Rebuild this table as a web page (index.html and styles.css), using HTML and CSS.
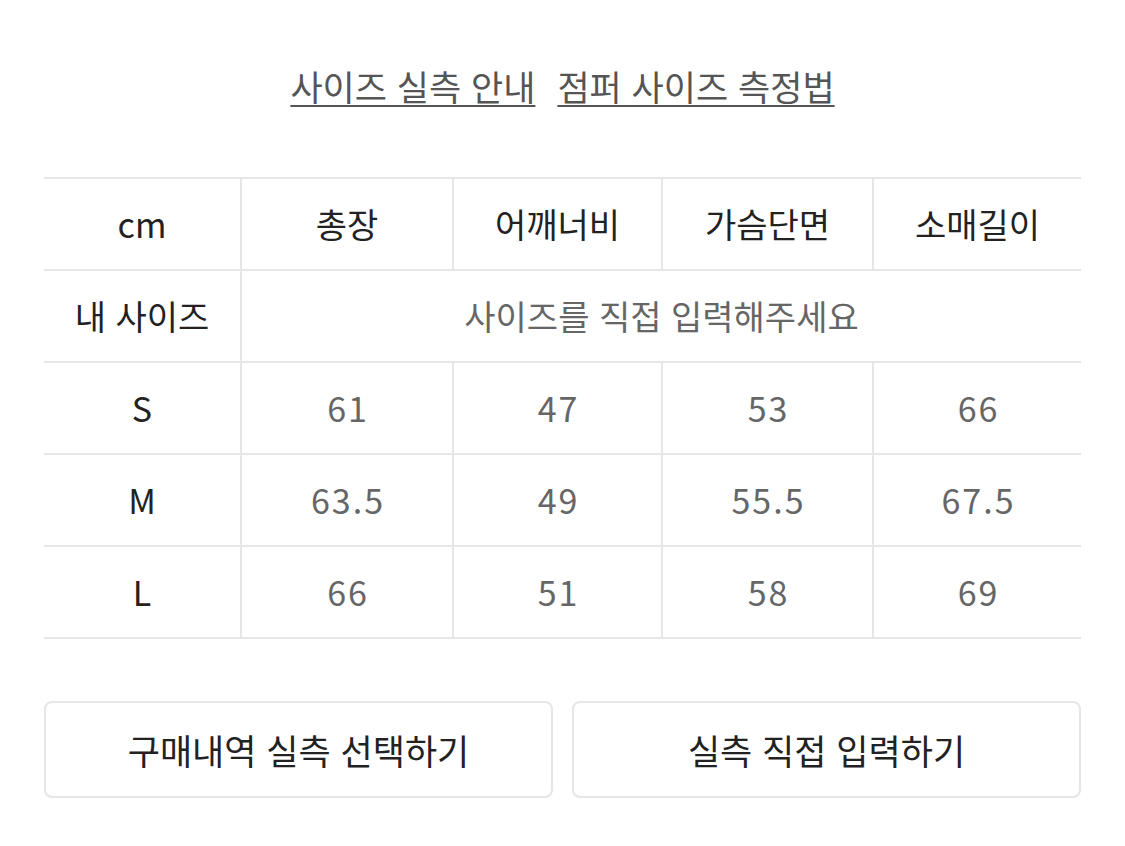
FILE: index.html
```html
<!DOCTYPE html>
<html lang="ko">
<head>
<meta charset="utf-8">
<link rel="stylesheet" href="styles.css">
</head>
<body>
<div class="page">
  <div class="links">
    <a class="link">사이즈 실측 안내</a>
    <a class="link">점퍼 사이즈 측정법</a>
  </div>
  <table class="size-table">
    <colgroup>
      <col class="c0"><col class="c1"><col class="c2"><col class="c3"><col class="c4">
    </colgroup>
    <tr class="head">
      <td>cm</td><td>총장</td><td>어깨너비</td><td>가슴단면</td><td>소매길이</td>
    </tr>
    <tr>
      <td class="label">내 사이즈</td><td class="placeholder" colspan="4">사이즈를 직접 입력해주세요</td>
    </tr>
    <tr>
      <td class="label">S</td><td class="num">61</td><td class="num">47</td><td class="num">53</td><td class="num">66</td>
    </tr>
    <tr>
      <td class="label">M</td><td class="num">63.5</td><td class="num">49</td><td class="num">55.5</td><td class="num">67.5</td>
    </tr>
    <tr>
      <td class="label">L</td><td class="num">66</td><td class="num">51</td><td class="num">58</td><td class="num">69</td>
    </tr>
  </table>
  <div class="buttons">
    <button class="btn">구매내역 실측 선택하기</button>
    <button class="btn">실측 직접 입력하기</button>
  </div>
</div>
</body>
</html>
```

FILE: styles.css
```css
html, body {
  margin: 0;
  padding: 0;
  background: #ffffff;
}
body {
  font-family: "Noto Sans CJK KR", "Noto Sans", sans-serif;
  color: #222;
}
.page {
  width: 1125px;
  padding: 58px 44px 0;
  box-sizing: border-box;
}
.links {
  display: flex;
  justify-content: center;
  gap: 22px;
  height: 60px;
  margin-bottom: 59px;
}
.link {
  font-size: 35px;
  line-height: 56px;
  color: #555;
  text-decoration: underline;
  text-decoration-thickness: 2px;
  text-underline-offset: 4px;
}
.size-table {
  width: 1037px;
  border-collapse: collapse;
  table-layout: fixed;
}
.c0 { width: 197px; }
.c1 { width: 212px; }
.c2 { width: 209px; }
.c3 { width: 211px; }
.c4 { width: 208px; }
.size-table td {
  height: 90px;
  padding: 0;
  text-align: center;
  vertical-align: middle;
  border-top: 2px solid #e6e6e6;
  border-bottom: 2px solid #e6e6e6;
  border-left: 2px solid #e6e6e6;
  font-size: 34px;
  line-height: 40px;
  color: #222;
}
.size-table td:first-child {
  border-left: none;
}
.size-table .placeholder {
  color: #666;
  font-size: 34px;
}
.size-table .num {
  color: #666;
  font-size: 34px;
  letter-spacing: 2px;
  text-indent: 2px;
}
.buttons {
  display: flex;
  gap: 19px;
  margin-top: 62px;
}
.btn {
  flex: 1;
  height: 97px;
  background: #fff;
  border: 2px solid #e6e6e6;
  border-radius: 8px;
  font-family: "Noto Sans CJK KR", "Noto Sans", sans-serif;
  font-size: 35px;
  color: #222;
  padding: 0;
}
```
